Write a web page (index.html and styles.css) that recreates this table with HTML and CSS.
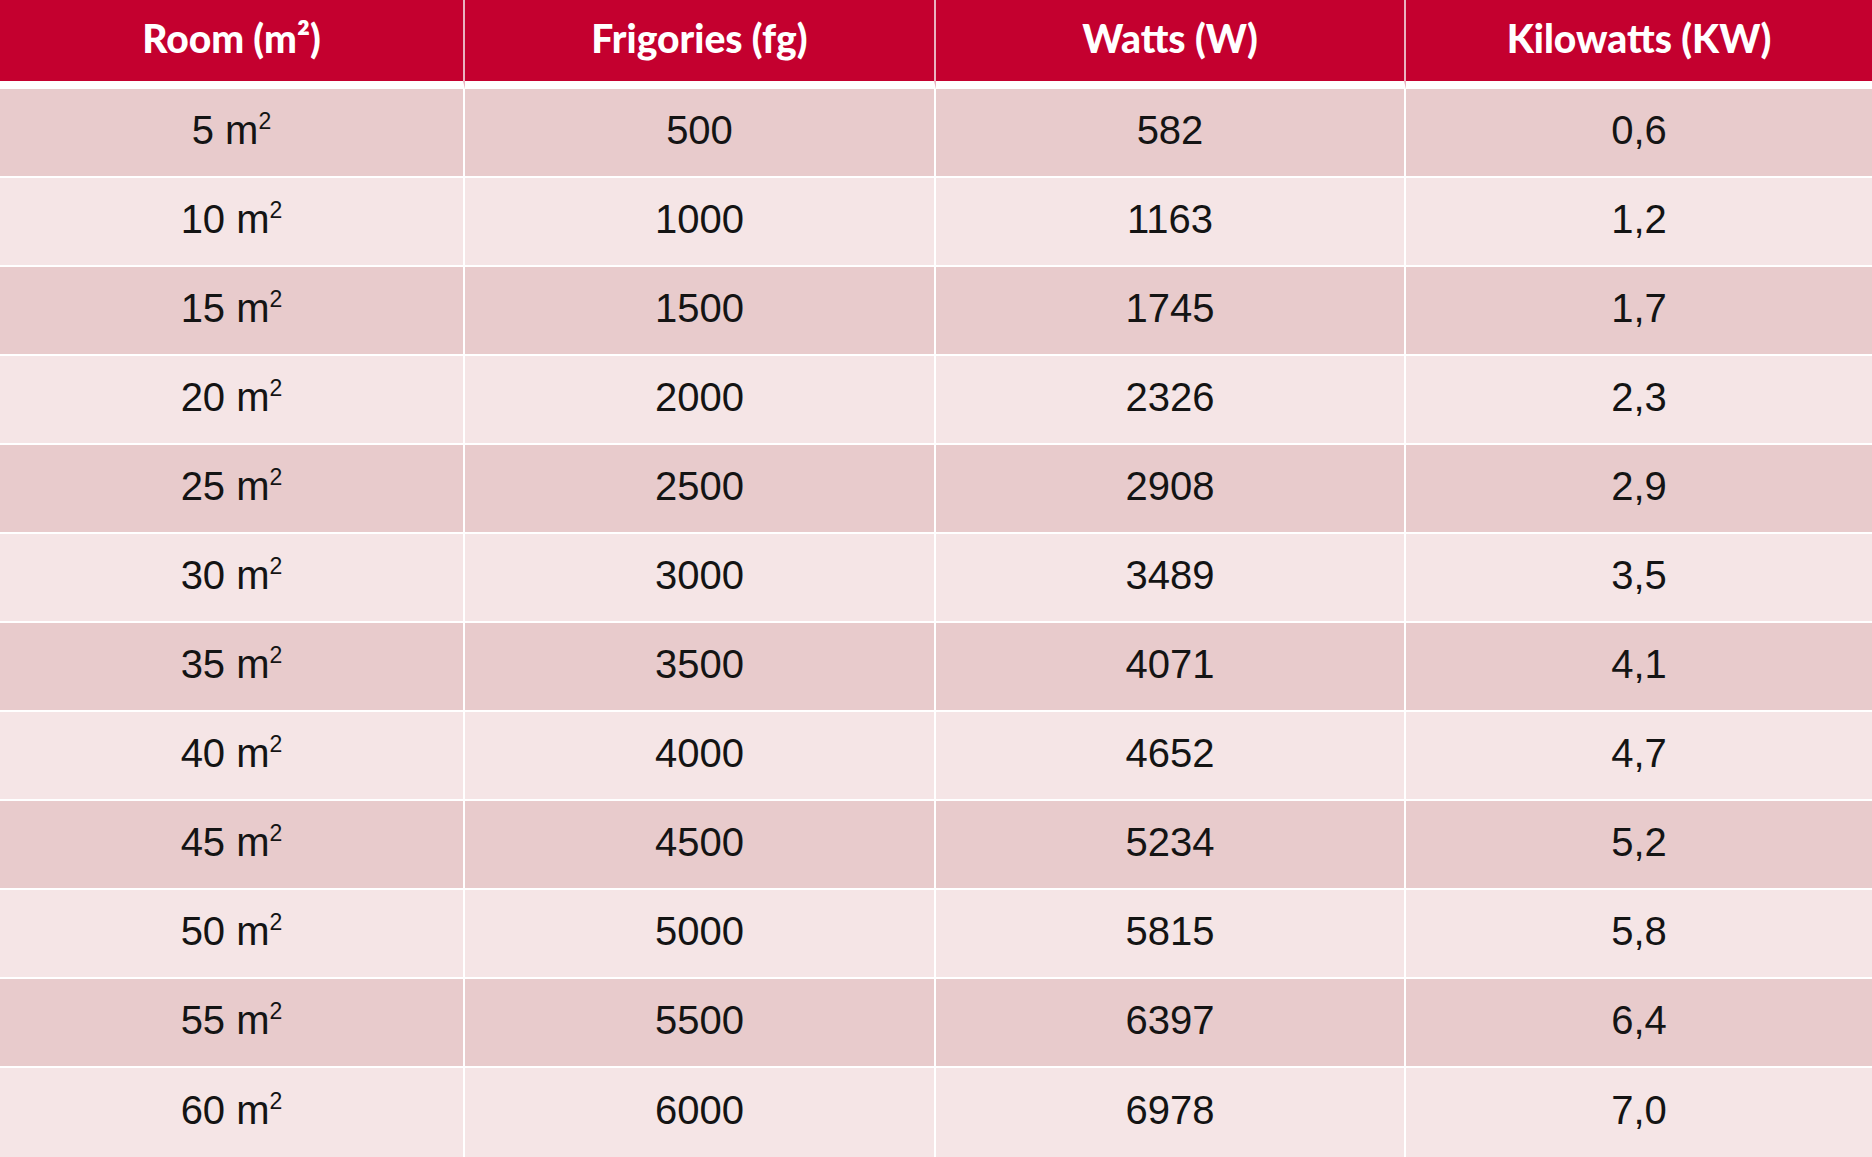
FILE: index.html
```html
<!DOCTYPE html>
<html lang="en">
<head>
<meta charset="utf-8">
<title>Room size to cooling power</title>
<link rel="stylesheet" href="styles.css">
</head>
<body>
<table class="power-table">
  <colgroup>
    <col class="c1"><col class="c2"><col class="c3"><col class="c4">
  </colgroup>
  <thead>
    <tr>
      <th>Room (m²)</th>
      <th>Frigories (fg)</th>
      <th>Watts (W)</th>
      <th>Kilowatts (KW)</th>
    </tr>
  </thead>
  <tbody>
    <tr class="dark"><td>5 m<sup>2</sup></td><td>500</td><td>582</td><td>0,6</td></tr>
    <tr class="light"><td>10 m<sup>2</sup></td><td>1000</td><td>1163</td><td>1,2</td></tr>
    <tr class="dark"><td>15 m<sup>2</sup></td><td>1500</td><td>1745</td><td>1,7</td></tr>
    <tr class="light"><td>20 m<sup>2</sup></td><td>2000</td><td>2326</td><td>2,3</td></tr>
    <tr class="dark"><td>25 m<sup>2</sup></td><td>2500</td><td>2908</td><td>2,9</td></tr>
    <tr class="light"><td>30 m<sup>2</sup></td><td>3000</td><td>3489</td><td>3,5</td></tr>
    <tr class="dark"><td>35 m<sup>2</sup></td><td>3500</td><td>4071</td><td>4,1</td></tr>
    <tr class="light"><td>40 m<sup>2</sup></td><td>4000</td><td>4652</td><td>4,7</td></tr>
    <tr class="dark"><td>45 m<sup>2</sup></td><td>4500</td><td>5234</td><td>5,2</td></tr>
    <tr class="light"><td>50 m<sup>2</sup></td><td>5000</td><td>5815</td><td>5,8</td></tr>
    <tr class="dark"><td>55 m<sup>2</sup></td><td>5500</td><td>6397</td><td>6,4</td></tr>
    <tr class="light"><td>60 m<sup>2</sup></td><td>6000</td><td>6978</td><td>7,0</td></tr>
  </tbody>
</table>
</body>
</html>
```

FILE: styles.css
```css
html, body {
  margin: 0;
  padding: 0;
  background: #ffffff;
}

.power-table {
  width: 1872px;
  border-collapse: separate;
  border-spacing: 0;
  table-layout: fixed;
}

.c1 { width: 465px; }
.c2 { width: 471px; }
.c3 { width: 470px; }
.c4 { width: 466px; }

.power-table th {
  height: 89px;
  padding: 0 0 5px 0;
  background: #c4002f;
  background-clip: padding-box;
  color: #ffffff;
  font-family: Lato, "Open Sans", sans-serif;
  font-weight: 900;
  font-size: 39px;
  text-align: center;
  vertical-align: middle;
  border-right: 2px solid #eab3c0;
  border-bottom: 8px solid #ffffff;
  box-sizing: border-box;
}

.power-table td {
  height: 89px;
  padding: 0 0 4px 0;
  font-family: "Liberation Sans", Arial, sans-serif;
  font-size: 40px;
  color: #141414;
  text-align: center;
  vertical-align: middle;
  border-right: 2px solid #ffffff;
  border-bottom: 2px solid #ffffff;
  box-sizing: border-box;
}

.power-table th:last-child,
.power-table td:last-child {
  border-right: none;
}

.power-table tr:last-child td {
  border-bottom: none;
}

.dark td { background: #e8cbcc; }
.light td { background: #f5e5e6; }

.power-table sup {
  font-size: 23px;
  line-height: 0;
  vertical-align: 15px;
}
```
